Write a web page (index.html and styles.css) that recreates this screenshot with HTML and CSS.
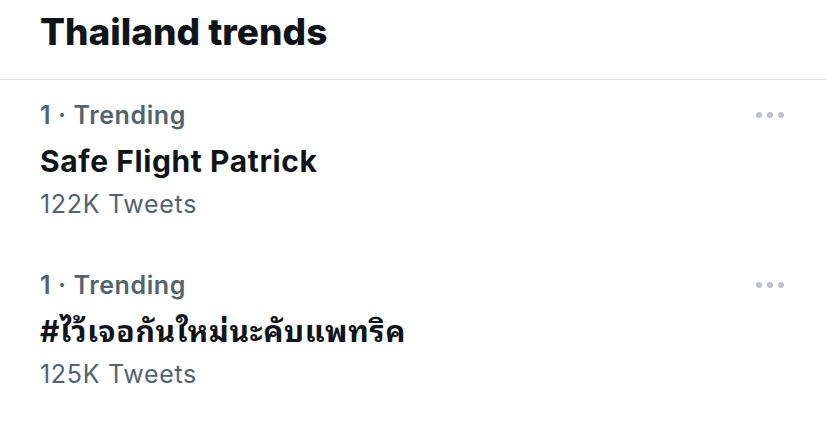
FILE: index.html
```html
<!DOCTYPE html>
<html lang="th">
<head>
<meta charset="utf-8">
<title>Thailand trends</title>
<link rel="stylesheet" href="styles.css">
</head>
<body>
<div class="panel">
  <div class="header">
    <h1 class="title">Thailand trends</h1>
  </div>
  <div class="trend">
    <div class="meta-row">
      <span class="meta">1 · Trending</span>
      <span class="more"><i></i><i></i><i></i></span>
    </div>
    <div class="name">Safe Flight Patrick</div>
    <div class="count">122K Tweets</div>
  </div>
  <div class="trend">
    <div class="meta-row">
      <span class="meta">1 · Trending</span>
      <span class="more"><i></i><i></i><i></i></span>
    </div>
    <div class="name thai">#ไว้เจอกันใหม่นะคับแพทริค</div>
    <div class="count">125K Tweets</div>
  </div>
</div>
</body>
</html>
```
FILE: styles.css
```css
html, body {
  margin: 0;
  padding: 0;
  background: #ffffff;
}
body {
  font-family: Inter, "Noto Sans", "Noto Sans Thai Looped", "Noto Sans Thai", sans-serif;
  color: #0f1419;
}
.panel {
  width: 826px;
}
.header {
  height: 79px;
  border-bottom: 1px solid #dcdfe1;
  padding-left: 40px;
  box-sizing: content-box;
}
.title {
  margin: 0;
  padding-top: 10px;
  font-size: 37px;
  line-height: 44px;
  font-weight: 800;
  letter-spacing: 0;
}
.trend {
  height: 170px;
  padding: 20px 42px 0 40px;
  box-sizing: border-box;
}
.meta-row {
  display: flex;
  justify-content: space-between;
  align-items: center;
  height: 30px;
}
.meta {
  font-size: 25px;
  line-height: 30px;
  font-weight: 600;
  letter-spacing: 0.6px;
  color: #536471;
}
.more {
  display: flex;
  gap: 5px;
}
.more i {
  width: 6px;
  height: 6px;
  border-radius: 50%;
  background: #b9c3cc;
}
.name {
  margin-top: 11px;
  font-size: 30px;
  line-height: 40px;
  font-weight: 700;
  letter-spacing: 0.6px;
}
.name.thai {
  letter-spacing: 0.7px;
}
.count {
  margin-top: 8px;
  font-size: 25px;
  line-height: 30px;
  letter-spacing: 0.7px;
  color: #536471;
}
```
